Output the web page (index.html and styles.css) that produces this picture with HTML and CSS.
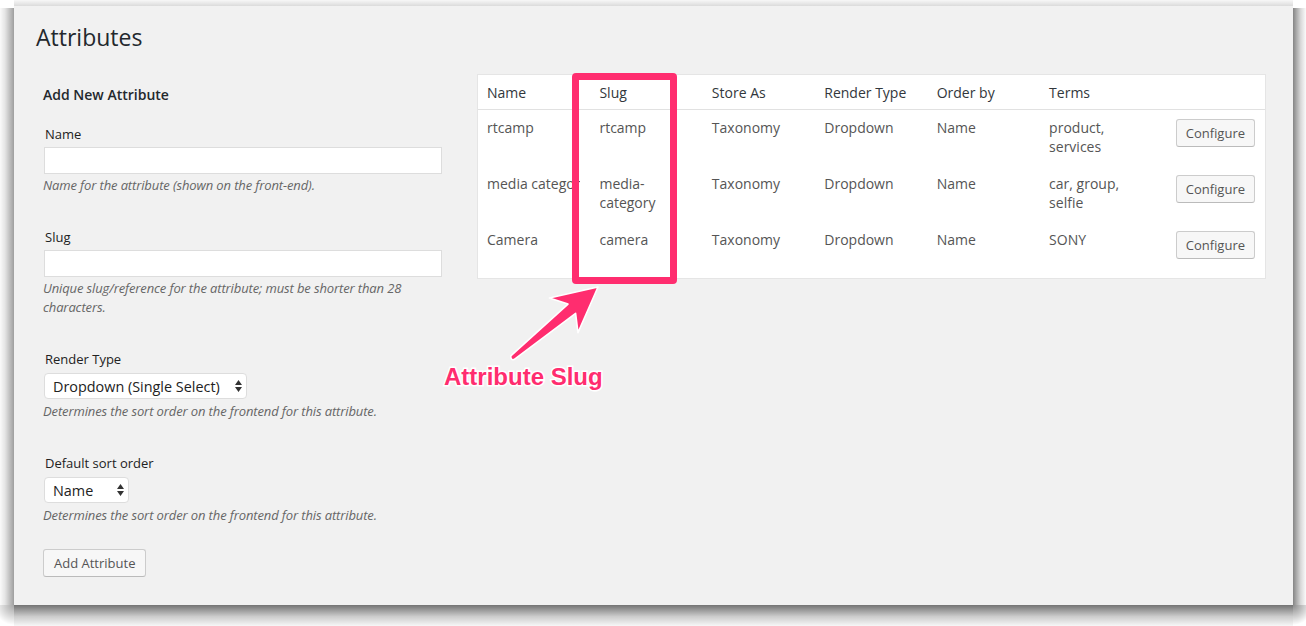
FILE: index.html
```html
<!DOCTYPE html>
<html>
<head>
<meta charset="utf-8">
<title>Attributes</title>
<link rel="stylesheet" href="styles.css">
</head>
<body>
<div class="window">
  <h1 class="title">Attributes</h1>
  <div class="cols">
    <div class="col-left">
      <h3 class="form-title">Add New Attribute</h3>
      <div class="field first">
        <label class="label">Name</label>
        <input class="text-input" type="text">
        <p class="desc">Name for the attribute (shown on the front-end).</p>
      </div>
      <div class="field">
        <label class="label">Slug</label>
        <input class="text-input" type="text">
        <p class="desc">Unique slug/reference for the attribute; must be shorter than 28 characters.</p>
      </div>
      <div class="field">
        <label class="label">Render Type</label>
        <div class="select select-wide">
          <span>Dropdown (Single Select)</span>
          <svg class="updown" width="7" height="12" viewBox="0 0 7 12"><path d="M0 5 L3.5 0 L7 5 Z M0 7 L7 7 L3.5 12 Z" fill="#333"/></svg>
        </div>
        <p class="desc desc-tight">Determines the sort order on the frontend for this attribute.</p>
      </div>
      <div class="field">
        <label class="label">Default sort order</label>
        <div class="select select-narrow">
          <span>Name</span>
          <svg class="updown" width="7" height="12" viewBox="0 0 7 12"><path d="M0 5 L3.5 0 L7 5 Z M0 7 L7 7 L3.5 12 Z" fill="#333"/></svg>
        </div>
        <p class="desc desc-tight">Determines the sort order on the frontend for this attribute.</p>
      </div>
      <button class="btn btn-add">Add Attribute</button>
    </div>
    <div class="col-right">
      <table class="attr-table">
        <thead>
          <tr>
            <th>Name</th>
            <th>Slug</th>
            <th>Store As</th>
            <th>Render Type</th>
            <th>Order by</th>
            <th>Terms</th>
            <th></th>
          </tr>
        </thead>
        <tbody>
          <tr>
            <td>rtcamp</td>
            <td>rtcamp</td>
            <td>Taxonomy</td>
            <td>Dropdown</td>
            <td>Name</td>
            <td>product, services</td>
            <td class="actions"><button class="btn btn-config">Configure</button></td>
          </tr>
          <tr>
            <td><span class="clip">media category</span></td>
            <td>media-category</td>
            <td>Taxonomy</td>
            <td>Dropdown</td>
            <td>Name</td>
            <td>car, group, selfie</td>
            <td class="actions"><button class="btn btn-config">Configure</button></td>
          </tr>
          <tr>
            <td>Camera</td>
            <td>camera</td>
            <td>Taxonomy</td>
            <td>Dropdown</td>
            <td>Name</td>
            <td>SONY</td>
            <td class="actions"><button class="btn btn-config">Configure</button></td>
          </tr>
        </tbody>
      </table>
      <div class="highlight"></div>
    </div>
  </div>
  <svg class="arrow" width="120" height="90" viewBox="490 280 120 90">
    <path d="M598 287 L549.4 298 L568 304.1 L510.8 355.8 Q510.5 360.5 514 359.6 L575.6 313.3 L578 332.6 Z" fill="#ff2d6f" stroke="#ffffff" stroke-width="1.6" stroke-linejoin="round"/>
  </svg>
  <div class="callout">Attribute Slug</div>
</div>
</body>
</html>
```

FILE: styles.css
```css
html {
  min-height: 100%;
  background:
    radial-gradient(circle at 0 0, rgba(0, 0, 0, 0.45) 0, rgba(0, 0, 0, 0) 20px) 1293px 605px / 13px 21px no-repeat,
    radial-gradient(circle at 14px 0, rgba(0, 0, 0, 0.35) 0, rgba(0, 0, 0, 0) 20px) 0 605px / 14px 21px no-repeat,
    linear-gradient(to bottom, rgba(0, 0, 0, 0.55), rgba(0, 0, 0, 0.2) 55%, rgba(0, 0, 0, 0.03)) 14px 605px / 1279px 21px no-repeat,
    linear-gradient(to right, rgba(0, 0, 0, 0.48), rgba(0, 0, 0, 0.15) 60%, rgba(0, 0, 0, 0.02)) 1293px 8px / 13px 597px no-repeat,
    linear-gradient(to left, rgba(0, 0, 0, 0.38), rgba(0, 0, 0, 0.1) 65%, rgba(0, 0, 0, 0.02)) 0 8px / 14px 597px no-repeat,
    linear-gradient(to top, rgba(0, 0, 0, 0.14), rgba(0, 0, 0, 0.03)) 14px 0 / 1279px 6px no-repeat,
    #ffffff;
}

html, body {
  padding: 0;
}

body {
  margin: 6px 13px 21px 14px;
  font-family: "Open Sans", "Noto Sans", sans-serif;
  color: #333;
}

.window {
  position: relative;
  width: 1279px;
  height: 599px;
  box-sizing: border-box;
  background: #f1f1f1;
  padding: 17px 27px 0 22px;
}

.title {
  margin: 0;
  font-size: 23px;
  font-weight: 400;
  line-height: 29px;
  color: #23282d;
}

.cols {
  display: flex;
  align-items: flex-start;
  margin-top: 22px;
}

.col-left {
  width: 400px;
  margin-left: 7px;
  margin-right: 34px;
  flex: none;
}

.form-title {
  margin: 11px 0 0;
  font-size: 14px;
  font-weight: 600;
  line-height: 19px;
  color: #23282d;
}

.field {
  margin-top: 33px;
}

.field.first {
  margin-top: 21px;
}

.label {
  display: block;
  margin-left: 2px;
  font-size: 13px;
  line-height: 18px;
  color: #222;
}

.text-input {
  display: block;
  width: 398px;
  height: 27px;
  box-sizing: border-box;
  margin: 4px 0 0 1px;
  padding: 0;
  border: 1px solid #ddd;
  background: #fff;
  outline: none;
}

.desc {
  margin: 2px 0 0;
  font-size: 13px;
  font-style: italic;
  line-height: 19px;
  letter-spacing: -0.12px;
  color: #666;
}

.desc-tight {
  margin-top: 3px;
}

.select {
  display: flex;
  align-items: center;
  justify-content: space-between;
  height: 26px;
  box-sizing: border-box;
  margin: 5px 0 0 1px;
  padding: 0 4px 0 8px;
  border: 1px solid #ddd;
  border-radius: 4px;
  background: #fff;
  font-size: 14.4px;
  color: #222;
}

.select-wide {
  width: 203px;
}

.select-narrow {
  width: 85px;
}

.updown {
  display: block;
  flex: none;
}

.btn {
  height: 28px;
  box-sizing: border-box;
  padding: 0 10px;
  border: 1px solid #ccc;
  border-bottom-color: #bbb;
  border-radius: 3px;
  background: #f7f7f7;
  font-family: "Open Sans", "Noto Sans", sans-serif;
  font-size: 13px;
  line-height: 26px;
  color: #555;
}

.btn-add {
  display: block;
  margin-top: 24px;
}

.col-right {
  position: relative;
  flex: none;
}

.attr-table {
  width: 789px;
  table-layout: fixed;
  border-collapse: separate;
  border-spacing: 0;
  background: #fff;
  border: 1px solid #e5e5e5;
}

.attr-table th {
  text-align: left;
  font-weight: 400;
  font-size: 14px;
  line-height: 19px;
  padding: 8px 10px 7px 9px;
  border-bottom: 1px solid #e1e1e1;
  color: #32373c;
}

.attr-table td {
  height: 38px;
  padding: 8px 10px 10px 9px;
  vertical-align: top;
  font-size: 14px;
  line-height: 19px;
  color: #555;
}

.clip {
  display: block;
  overflow: hidden;
  white-space: nowrap;
}

.actions .btn-config {
  display: block;
  margin: 1px 0 0 auto;
  padding: 0 9px;
}

.highlight {
  position: absolute;
  left: 95px;
  top: -1px;
  width: 105px;
  height: 211px;
  box-sizing: border-box;
  border: 7px solid #ff2d6f;
  border-radius: 4px;
}

.arrow {
  position: absolute;
  left: 476px;
  top: 274px;
}

.callout {
  position: absolute;
  left: 430px;
  top: 359px;
  font-family: "Liberation Sans", Arial, sans-serif;
  font-weight: 700;
  font-size: 24px;
  line-height: 24px;
  color: #ff2d6f;
  white-space: nowrap;
  -webkit-text-stroke: 3px #ffffff;
  paint-order: stroke fill;
}
```
